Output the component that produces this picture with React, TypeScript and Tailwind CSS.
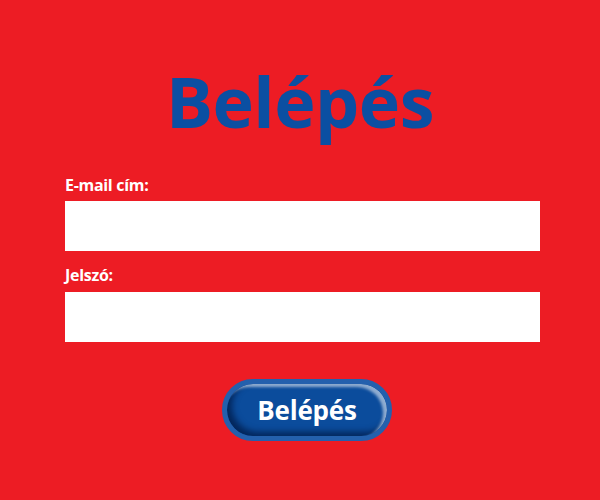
import React from "react";

export default function App() {
  return (
    <div
      className="w-[600px] h-[500px] bg-[#ed1c24] flex flex-col"
      style={{ fontFamily: '"Open Sans", "Noto Sans", sans-serif' }}
    >
      <h1 className="mt-[66px] h-[70px] leading-[70px] text-[70px] font-bold text-[#0b4fa2] text-center tracking-[-0.5px]">
        Belépés
      </h1>
      <div className="px-[65px] mt-[41px] flex flex-col">
        <label className="h-4 leading-4 text-[16px] font-bold text-white tracking-[-0.3px]">
          E-mail cím:
        </label>
        <input
          type="email"
          className="mt-2 h-[50px] w-[475px] bg-white outline-none px-3"
        />
        <label className="mt-4 h-4 leading-4 text-[16px] font-bold text-white tracking-[-0.3px]">
          Jelszó:
        </label>
        <input
          type="password"
          className="mt-[9px] h-[50px] w-[475px] bg-white outline-none px-3"
        />
      </div>
      <div className="mt-[37px] flex justify-center pl-[14px]">
        <button className="w-[170px] h-[62px] rounded-full border-[5px] border-[#2460ad] bg-[#0b4c9c] shadow-[inset_-4px_3px_3px_rgba(255,255,255,0.55),inset_5px_-4px_6px_rgba(0,25,70,0.75)] flex items-center justify-center text-white text-[26px] leading-[26px] font-bold tracking-[-0.2px]">
          Belépés
        </button>
      </div>
    </div>
  );
}
